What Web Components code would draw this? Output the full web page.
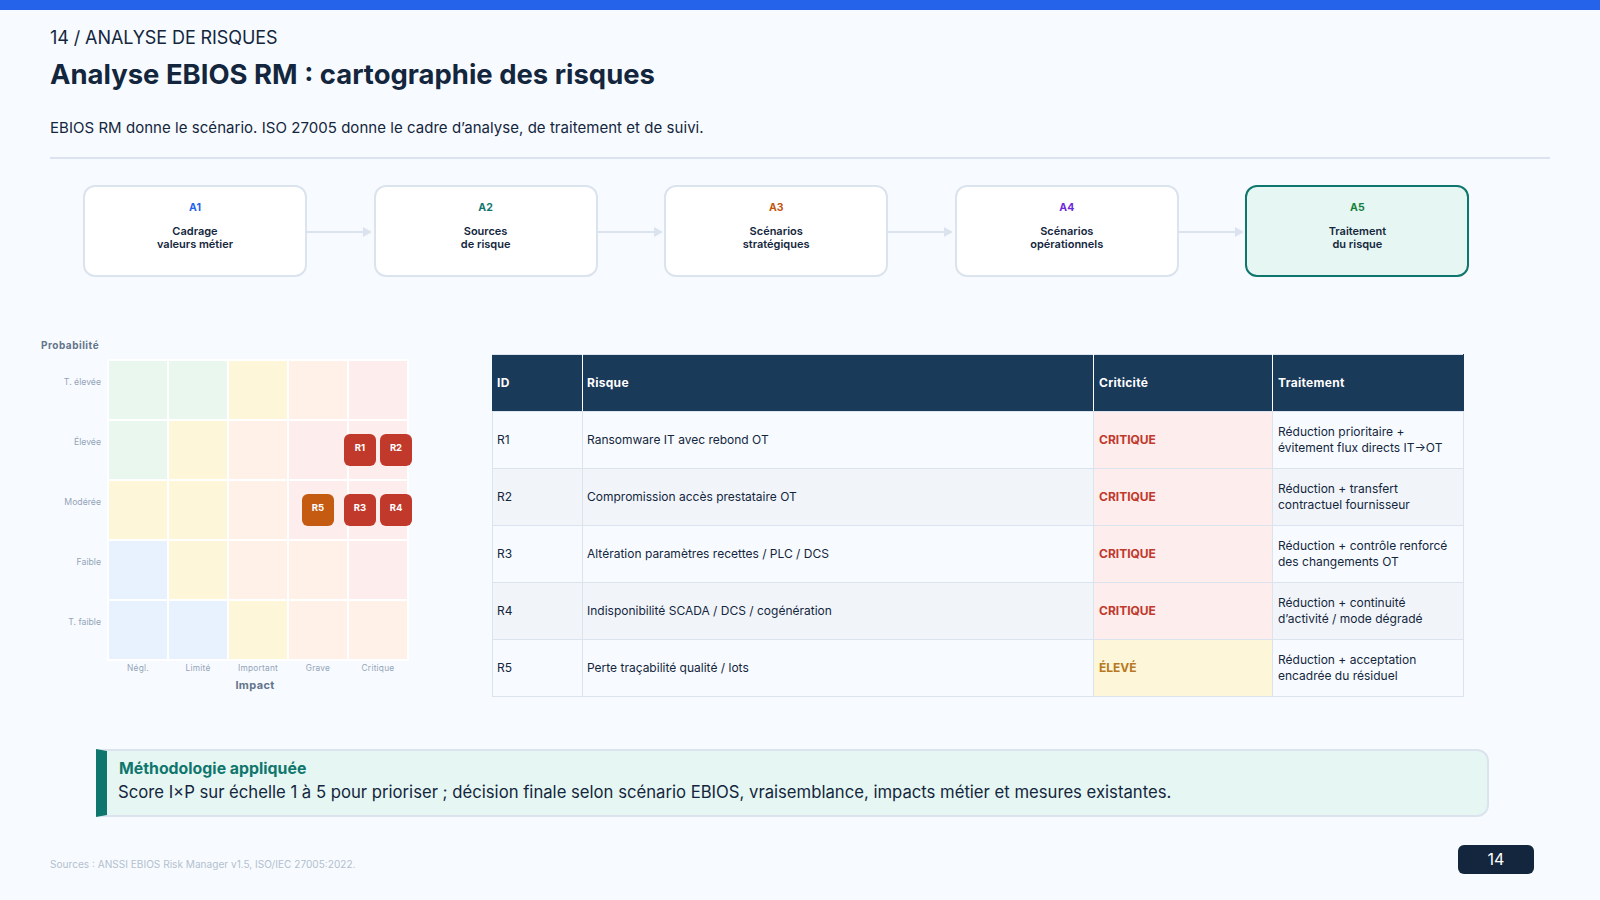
<!DOCTYPE html>
<html lang="fr">
<head>
<meta charset="utf-8">
<title>Analyse EBIOS RM</title>
<style>
  html, body { margin: 0; padding: 0; }
  body { width: 1600px; height: 900px; overflow: hidden; background: #f7fbff; color: #14263d; font-family: "Inter", "Liberation Sans", sans-serif; }
</style>
</head>
<body>
<ebios-slide>
  <slide-header slot="header" kicker="14 / ANALYSE DE RISQUES" heading="Analyse EBIOS RM : cartographie des risques" lead="EBIOS RM donne le scénario. ISO 27005 donne le cadre d’analyse, de traitement et de suivi."></slide-header>
  <step-flow slot="steps">
    <flow-step code="A1" color="#2563eb">Cadrage<br>valeurs métier</flow-step>
    <flow-step code="A2" color="#0f766e">Sources<br>de risque</flow-step>
    <flow-step code="A3" color="#c2560f">Scénarios<br>stratégiques</flow-step>
    <flow-step code="A4" color="#6d28d9">Scénarios<br>opérationnels</flow-step>
    <flow-step code="A5" color="#15803d" active>Traitement<br>du risque</flow-step>
  </step-flow>
  <risk-matrix slot="matrix"></risk-matrix>
  <risk-table slot="table"></risk-table>
  <method-note slot="note" heading="Méthodologie appliquée">Score I×P sur échelle 1 à 5 pour prioriser ; décision finale selon scénario EBIOS, vraisemblance, impacts métier et mesures existantes.</method-note>
  <slide-footer slot="footer" sources="Sources : ANSSI EBIOS Risk Manager v1.5, ISO/IEC 27005:2022." page="14"></slide-footer>
</ebios-slide>

<script>
// slide frame
var template_slide = document.createElement("template");
template_slide.innerHTML = `
<style>
  :host { display: flex; flex-direction: column; width: 1600px; height: 900px; box-sizing: border-box; border-top: 10px solid #2563eb; }
  .body { display: flex; flex-direction: column; padding: 0 50px; }
  .middle { display: flex; margin: 61px 0 0 -9px; height: 359px; }
  .left { width: 451px; flex: none; }
  .right { padding-top: 16px; }
  .note { padding: 0 0 0 46px; margin-top: 52px; }
  .foot { margin-top: 28px; }
</style>
<div class="body">
  <slot name="header"></slot>
  <slot name="steps"></slot>
  <div class="middle">
    <div class="left"><slot name="matrix"></slot></div>
    <div class="right"><slot name="table"></slot></div>
  </div>
  <div class="note"><slot name="note"></slot></div>
  <div class="foot"><slot name="footer"></slot></div>
</div>`;
class EbiosSlide extends HTMLElement {
  constructor() {
    super();
    this.attachShadow({ mode: "open" });
    this.shadowRoot.appendChild(template_slide.content.cloneNode(true));
  }
}
customElements.define("ebios-slide", EbiosSlide);

// header
var template_header = document.createElement("template");
template_header.innerHTML = `
<style>
  :host { display: block; border-bottom: 2px solid #dbe4ee; height: 147px; }
  .kicker { font-size: 18px; line-height: 24px; padding-top: 16px; color: #14263d; letter-spacing: -0.09px; }
  h1 { margin: 6px 0 0; font-size: 27.45px; line-height: 36px; font-weight: 700; color: #14263d; }
  p { margin: 25px 0 0; font-size: 15px; line-height: 22px; color: #14263d; letter-spacing: 0.04px; }
</style>
<div class="kicker"></div>
<h1></h1>
<p></p>`;
class SlideHeader extends HTMLElement {
  constructor() {
    super();
    this.attachShadow({ mode: "open" });
    this.shadowRoot.appendChild(template_header.content.cloneNode(true));
  }
  connectedCallback() {
    this.shadowRoot.querySelector(".kicker").textContent = this.getAttribute("kicker");
    this.shadowRoot.querySelector("h1").textContent = this.getAttribute("heading");
    this.shadowRoot.querySelector("p").textContent = this.getAttribute("lead");
  }
}
customElements.define("slide-header", SlideHeader);

// A1..A5 flow
var template_flow = document.createElement("template");
template_flow.innerHTML = `
<style>
  :host { display: flex; margin: 26px 0 0 33px; width: 1386.4px; }
  ::slotted(flow-step:not(:last-child)) { margin-right: 66.6px; }
</style>
<slot></slot>`;
class StepFlow extends HTMLElement {
  constructor() {
    super();
    this.attachShadow({ mode: "open" });
    this.shadowRoot.appendChild(template_flow.content.cloneNode(true));
  }
}
customElements.define("step-flow", StepFlow);

var template_step = document.createElement("template");
template_step.innerHTML = `
<style>
  :host { display: block; position: relative; flex: none; width: 224px; height: 92px; box-sizing: border-box; background: #fff; border: 2px solid #dbe4ee; border-radius: 12px; text-align: center; }
  :host([active]) { background: #e6f6f2; border-color: #0f766e; }
  .code { font-size: 10.5px; line-height: 14px; font-weight: 700; margin-top: 14px; }
  .label { font-size: 11px; line-height: 12.6px; font-weight: 600; margin-top: 10px; color: #14263d; }
  svg { position: absolute; left: 222px; top: 38.5px; }
  :host(:last-child) svg { display: none; }
</style>
<div class="code"></div>
<div class="label"><slot></slot></div>
<svg width="66" height="12" viewBox="0 0 66 12"><path d="M0 6H57" stroke="#dbe4ee" stroke-width="2" fill="none"/><path d="M56 1l9 5-9 5z" fill="#dbe4ee"/></svg>`;
class FlowStep extends HTMLElement {
  constructor() {
    super();
    this.attachShadow({ mode: "open" });
    this.shadowRoot.appendChild(template_step.content.cloneNode(true));
  }
  connectedCallback() {
    var code = this.shadowRoot.querySelector(".code");
    code.textContent = this.getAttribute("code");
    code.style.color = this.getAttribute("color");
  }
}
customElements.define("flow-step", FlowStep);

// probability x impact grid
var template_matrix = document.createElement("template");
template_matrix.innerHTML = `
<style>
  :host { display: block; color: #94a3b8; }
  .title { font-size: 10px; line-height: 14px; font-weight: 700; color: #64748b; letter-spacing: 0.5px; margin-bottom: 7px; }
  .wrap { display: grid; grid-template-columns: 60px 302px; column-gap: 6px; }
  .rows { display: grid; grid-template-rows: repeat(5, 60px); padding-top: 2px; height: 302px; box-sizing: border-box; overflow: hidden; }
  .rows span { font-size: 8.7px; line-height: 43px; text-align: right; }
  .grid { position: relative; display: grid; grid-template-columns: repeat(5, 58px); grid-auto-rows: 58px; gap: 2px; padding: 2px; background: #fff; width: 302px; height: 302px; box-sizing: border-box; }
  .g { background: #e9f7ef; } .y { background: #fef6d9; } .o { background: #fff1e8; } .r { background: #fdeded; } .b { background: #e8f2fe; }
  .cols { grid-column: 2; display: grid; grid-template-columns: repeat(5, 60px); padding: 0 1px; font-size: 8.3px; letter-spacing: 0.25px; line-height: 14px; text-align: center; }
  .axis { grid-column: 2; font-size: 11px; letter-spacing: 0.35px; line-height: 14px; font-weight: 700; color: #64748b; text-align: center; margin-top: 3px; padding-right: 6px; }
  .badge { position: absolute; width: 32px; height: 32px; border-radius: 6px; background: #c0392b; color: #fff; font-size: 9.5px; font-weight: 700; line-height: 27.4px; text-align: center; }
  .badge.amber { background: #c55a11; }
</style>
<div class="title">Probabilité</div>
<div class="wrap">
  <div class="rows"><span>T. élevée</span><span>Élevée</span><span>Modérée</span><span>Faible</span><span>T. faible</span></div>
  <div class="grid">
    <i class="g"></i><i class="g"></i><i class="y"></i><i class="o"></i><i class="r"></i>
    <i class="g"></i><i class="y"></i><i class="o"></i><i class="r"></i><i class="r"></i>
    <i class="y"></i><i class="y"></i><i class="o"></i><i class="r"></i><i class="r"></i>
    <i class="b"></i><i class="y"></i><i class="o"></i><i class="o"></i><i class="r"></i>
    <i class="b"></i><i class="b"></i><i class="y"></i><i class="o"></i><i class="o"></i>
    <div class="badge" style="left:237px;top:75px">R1</div>
    <div class="badge" style="left:273px;top:75px">R2</div>
    <div class="badge amber" style="left:195px;top:135px">R5</div>
    <div class="badge" style="left:237px;top:135px">R3</div>
    <div class="badge" style="left:273px;top:135px">R4</div>
  </div>
  <div class="cols"><span>Négl.</span><span>Limité</span><span>Important</span><span>Grave</span><span>Critique</span></div>
  <div class="axis">Impact</div>
</div>`;
class RiskMatrix extends HTMLElement {
  constructor() {
    super();
    this.attachShadow({ mode: "open" });
    this.shadowRoot.appendChild(template_matrix.content.cloneNode(true));
  }
}
customElements.define("risk-matrix", RiskMatrix);

// risk table
var risks = [
  ["R1", "Ransomware IT avec rebond OT", "CRITIQUE", "Réduction prioritaire +<br>évitement flux directs IT→OT"],
  ["R2", "Compromission accès prestataire OT", "CRITIQUE", "Réduction + transfert<br>contractuel fournisseur"],
  ["R3", "Altération paramètres recettes / PLC / DCS", "CRITIQUE", "Réduction + contrôle renforcé<br>des changements OT"],
  ["R4", "Indisponibilité SCADA / DCS / cogénération", "CRITIQUE", "Réduction + continuité<br>d’activité / mode dégradé"],
  ["R5", "Perte traçabilité qualité / lots", "ÉLEVÉ", "Réduction + acceptation<br>encadrée du résiduel"]
];
var template_table = document.createElement("template");
template_table.innerHTML = `
<style>
  :host { display: block; width: 971px; }
  table { border-collapse: collapse; table-layout: fixed; width: 971px; font-size: 12px; color: #14263d; }
  th, td { border: 1px solid #dbe4ee; text-align: left; vertical-align: middle; padding: 0 4px 2px; height: 57px; box-sizing: border-box; }
  th { background: #1a3a5a; color: #fff; font-size: 12px; font-weight: 700; letter-spacing: 0.3px; border-color: #dbe4ee #fff; border-left-color: #fff; }
  th:first-child { border-left-color: #1a3a5a; }
  th:last-child { border-right-color: #1a3a5a; }
  tr:nth-child(even) td { background: #f1f5fa; }
  th.t { padding-left: 5px; }
  td.lvl { font-weight: 700; padding-left: 5px; color: #c0392b; background: #fdeded !important; }
  td.lvl.high { color: #b7791f; background: #fef6d9 !important; }
  td.tr { line-height: 16px; padding: 0 4px 0 5px; }
</style>
<table>
  <colgroup><col style="width:90px"><col style="width:511px"><col style="width:179px"><col style="width:191px"></colgroup>
  <thead><tr><th>ID</th><th>Risque</th><th class="t">Criticité</th><th class="t">Traitement</th></tr></thead>
  <tbody></tbody>
</table>`;
class RiskTable extends HTMLElement {
  constructor() {
    super();
    this.attachShadow({ mode: "open" });
    this.shadowRoot.appendChild(template_table.content.cloneNode(true));
  }
  connectedCallback() {
    var tbody = this.shadowRoot.querySelector("tbody");
    tbody.innerHTML = risks.map(r => `<tr><td>${r[0]}</td><td>${r[1]}</td><td class="lvl ${r[2] == "ÉLEVÉ" ? "high" : ""}">${r[2]}</td><td class="tr">${r[3]}</td></tr>`).join("");
  }
}
customElements.define("risk-table", RiskTable);

// methodology callout
var template_note = document.createElement("template");
template_note.innerHTML = `
<style>
  :host { display: block; width: 1393px; height: 68px; box-sizing: border-box; background: #e6f6f2; border: 2px solid #dbe4ee; border-left: 11px solid #0f766e; border-radius: 0 12px 12px 0; padding: 8px 11px; }
  .h { font-size: 15.85px; line-height: 20px; font-weight: 700; color: #0f766e; padding-left: 1px; }
  .t { font-size: 16.68px; line-height: 24px; color: #14263d; margin-top: 1px; }
</style>
<div class="h"></div>
<div class="t"><slot></slot></div>`;
class MethodNote extends HTMLElement {
  constructor() {
    super();
    this.attachShadow({ mode: "open" });
    this.shadowRoot.appendChild(template_note.content.cloneNode(true));
  }
  connectedCallback() {
    this.shadowRoot.querySelector(".h").textContent = this.getAttribute("heading");
  }
}
customElements.define("method-note", MethodNote);

// footer
var template_footer = document.createElement("template");
template_footer.innerHTML = `
<style>
  :host { display: flex; align-items: center; justify-content: space-between; width: 1484px; height: 29px; }
  .src { font-size: 10.1px; color: #b4bfce; padding-top: 8px; }
  .num { width: 76px; height: 29px; border-radius: 6px; background: #14263d; color: #fff; font-size: 16px; line-height: 29px; text-align: center; }
</style>
<span class="src"></span>
<span class="num"></span>`;
class SlideFooter extends HTMLElement {
  constructor() {
    super();
    this.attachShadow({ mode: "open" });
    this.shadowRoot.appendChild(template_footer.content.cloneNode(true));
  }
  connectedCallback() {
    this.shadowRoot.querySelector(".src").textContent = this.getAttribute("sources");
    this.shadowRoot.querySelector(".num").textContent = this.getAttribute("page");
  }
}
customElements.define("slide-footer", SlideFooter);
</script>
</body>
</html>
